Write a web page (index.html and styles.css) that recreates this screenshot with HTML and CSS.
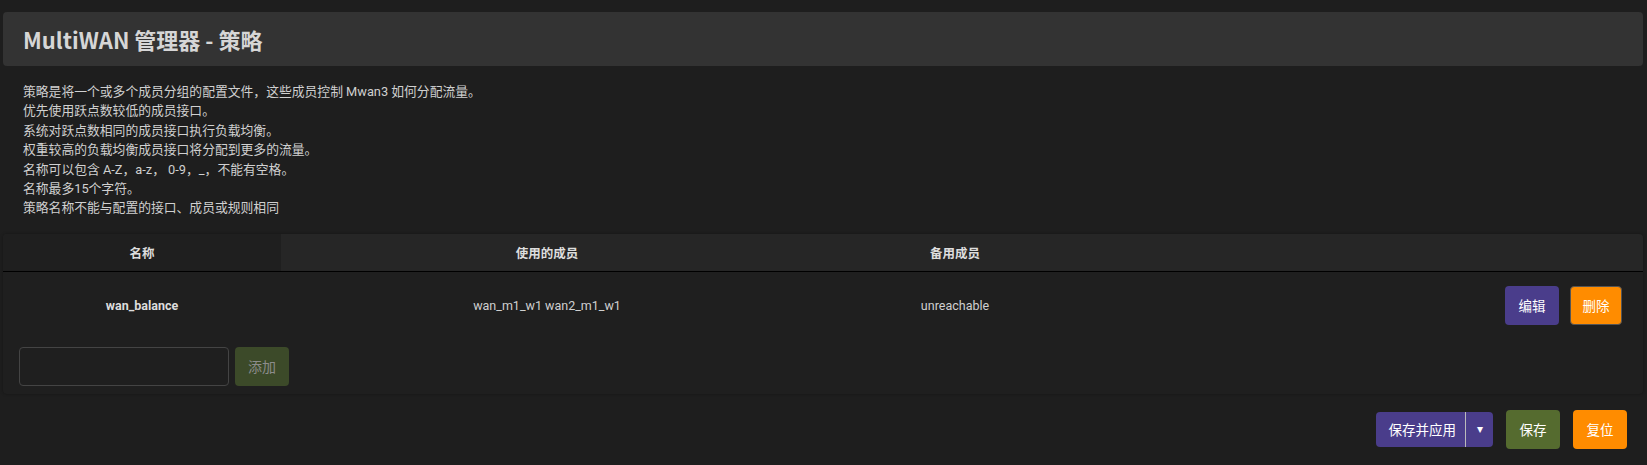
FILE: index.html
```html
<!DOCTYPE html>
<html lang="zh-CN">
<head>
<meta charset="utf-8">
<title>MultiWAN 管理器 - 策略</title>
<link rel="stylesheet" href="styles.css">
</head>
<body>
<div class="page">
  <h2 class="title-bar">MultiWAN 管理器 - 策略</h2>
  <div class="desc">
    策略是将一个或多个成员分组的配置文件，这些成员控制 Mwan3 如何分配流量。<br>
    优先使用跃点数较低的成员接口。<br>
    系统对跃点数相同的成员接口执行负载均衡。<br>
    权重较高的负载均衡成员接口将分配到更多的流量。<br>
    名称可以包含 A-Z，a-z， 0-9，_，不能有空格。<br>
    名称最多15个字符。<br>
    策略名称不能与配置的接口、成员或规则相同
  </div>
  <div class="table-section">
    <div class="row head">
      <div class="cell c1 first">名称</div>
      <div class="cell c2">使用的成员</div>
      <div class="cell c3">备用成员</div>
      <div class="cell c4"></div>
    </div>
    <div class="row data">
      <div class="cell c1 name">wan_balance</div>
      <div class="cell c2">wan_m1_w1 wan2_m1_w1</div>
      <div class="cell c3">unreachable</div>
      <div class="cell c4 actions">
        <button class="btn edit">编辑</button>
        <button class="btn remove">删除</button>
      </div>
    </div>
    <div class="add-row">
      <input class="add-input" type="text">
      <button class="btn add">添加</button>
    </div>
  </div>
  <div class="footer">
    <div class="split-btn">
      <span class="split-main">保存并应用</span>
      <span class="split-sep"></span>
      <span class="split-arrow">▾</span>
    </div>
    <button class="btn save">保存</button>
    <button class="btn reset">复位</button>
  </div>
</div>
</body>
</html>
```

FILE: styles.css
```css
html, body {
  margin: 0;
  padding: 0;
  background: #1e1e1e;
}
body {
  font-family: Roboto, "Noto Sans CJK SC", sans-serif;
  color: #cccccc;
  font-size: 13px;
}
.page {
  padding: 12px 4px 0 3px;
}
.title-bar {
  margin: 0;
  height: 54px;
  box-sizing: border-box;
  background: #333333;
  border-radius: 4px;
  padding: 0 20px;
  display: flex;
  align-items: center;
  font-family: "Noto Sans CJK SC", "Noto Sans", sans-serif;
  font-size: 22px;
  font-weight: bold;
  color: #d6d6d6;
}
.desc {
  margin: 16px 0 0 20px;
  line-height: 19.4px;
  font-size: 12.8px;
  color: #d0d0d0;
}
.table-section {
  margin-top: 16px;
  background: #1f1f1f;
  border-radius: 4px;
  box-shadow: 0 0 3px rgba(0,0,0,0.35);
  padding-bottom: 8px;
}
.row {
  display: grid;
  grid-template-columns: 278px 532px 284px 1fr;
}
.row.head {
  height: 37px;
  background: #262626;
  border-bottom: 1px solid #000;
  border-radius: 4px 4px 0 0;
  font-weight: bold;
  color: #dddddd;
  font-size: 12.5px;
}
.row.head .first {
  background: #1f1f1f;
  border-radius: 4px 0 0 0;
}
.cell {
  display: flex;
  align-items: center;
  justify-content: center;
}
.row.data {
  height: 67px;
  font-size: 12.5px;
  color: #d0d0d0;
}
.name {
  font-weight: bold;
  color: #dddddd;
}
.actions {
  justify-content: flex-end;
  gap: 11px;
  padding-right: 21px;
}
.btn {
  font-family: Roboto, "Noto Sans CJK SC", sans-serif;
  font-size: 13.5px;
  color: #ffffff;
  border: none;
  border-radius: 4px;
  height: 39px;
  padding: 0;
  cursor: pointer;
}
.edit {
  width: 54px;
  background: #4a3d8b;
}
.remove {
  width: 52px;
  background: #ff8c00;
  border: 1px solid #555555;
}
.add-row {
  display: flex;
  gap: 6px;
  padding: 8px 0 0 16px;
}
.add-input {
  width: 210px;
  height: 39px;
  box-sizing: border-box;
  background: #1f1f1f;
  border: 1px solid #444444;
  border-radius: 4px;
}
.add {
  width: 54px;
  background: #3c4a29;
  color: #8c8c8c;
  font-size: 14px;
}
.footer {
  display: flex;
  justify-content: flex-end;
  align-items: center;
  gap: 13px;
  padding: 16px 16px 0 0;
}
.split-btn {
  display: flex;
  align-items: center;
  height: 35px;
  background: #4a3d8b;
  border-radius: 4px;
  color: #ffffff;
  font-size: 13.5px;
}
.split-main {
  padding: 0 9px 0 13px;
}
.split-sep {
  width: 1px;
  height: 35px;
  background: #bbbbbb;
}
.split-arrow {
  width: 27px;
  text-align: center;
  font-size: 12px;
}
.save {
  width: 54px;
  background: #556b2f;
}
.reset {
  width: 54px;
  background: #ff8c00;
}
```
